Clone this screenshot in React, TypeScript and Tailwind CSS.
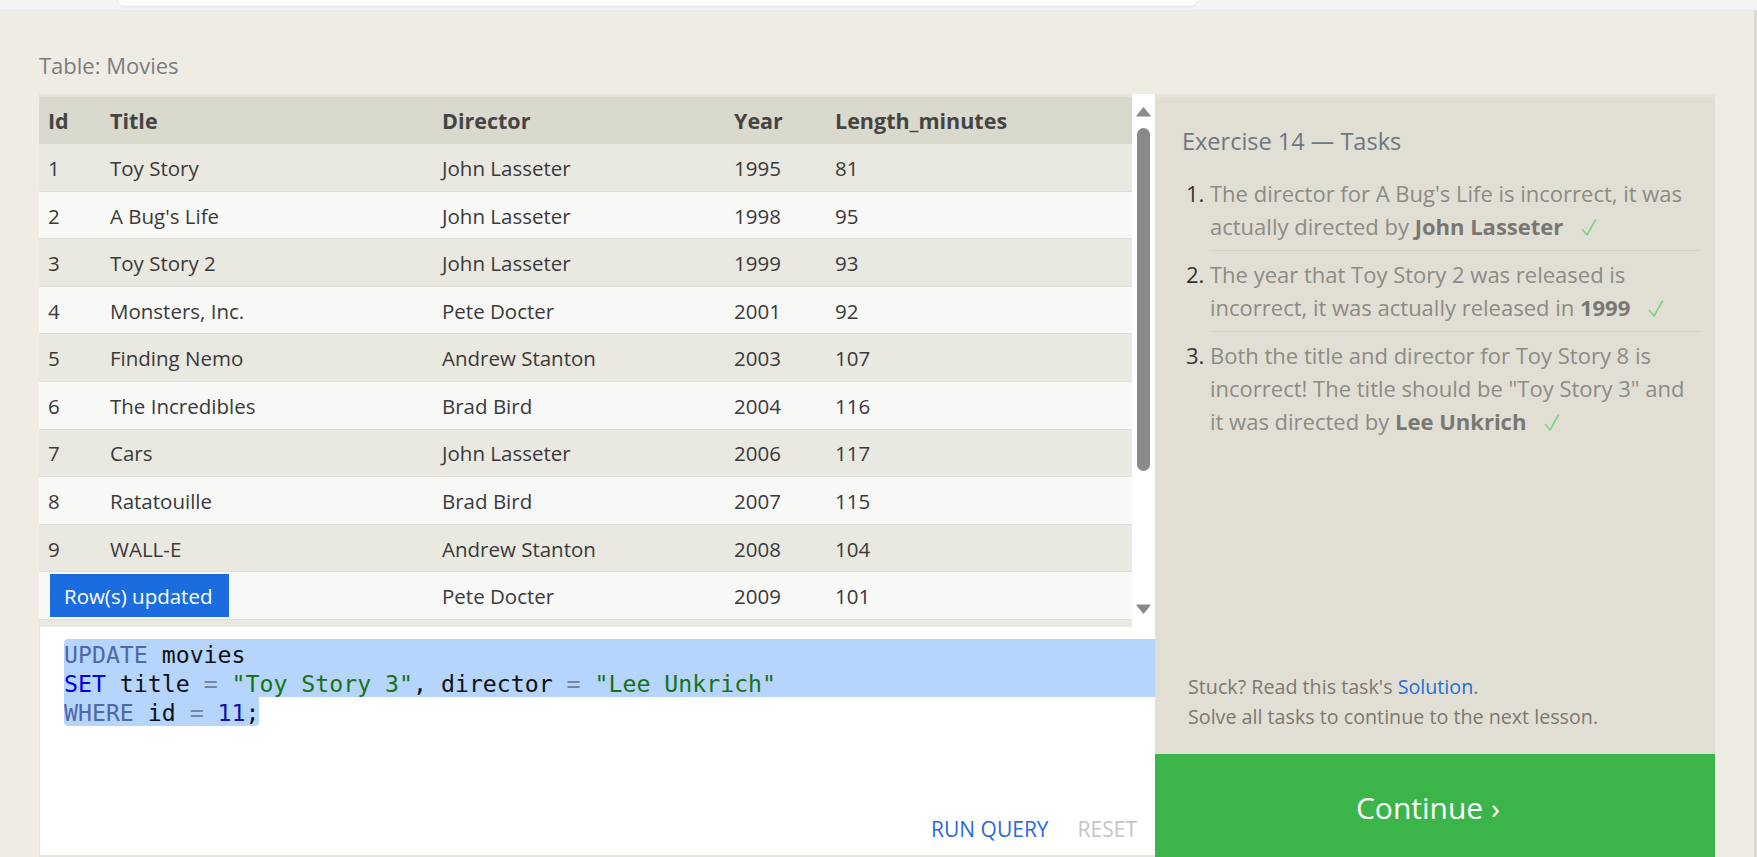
import React from "react";

const rows: [string, string, string, string, string][] = [
  ["1", "Toy Story", "John Lasseter", "1995", "81"],
  ["2", "A Bug's Life", "John Lasseter", "1998", "95"],
  ["3", "Toy Story 2", "John Lasseter", "1999", "93"],
  ["4", "Monsters, Inc.", "Pete Docter", "2001", "92"],
  ["5", "Finding Nemo", "Andrew Stanton", "2003", "107"],
  ["6", "The Incredibles", "Brad Bird", "2004", "116"],
  ["7", "Cars", "John Lasseter", "2006", "117"],
  ["8", "Ratatouille", "Brad Bird", "2007", "115"],
  ["9", "WALL-E", "Andrew Stanton", "2008", "104"],
  ["10", "Up", "Pete Docter", "2009", "101"],
  ["11", "Toy Story 3", "Lee Unkrich", "2010", "103"],
];

const gridCols = "grid grid-cols-[62px_332px_292px_101px_1fr]";

function Check() {
  return (
    <svg
      width="16"
      height="17"
      viewBox="0 0 16 17"
      className="inline-block ml-[18px] align-[-1px]"
    >
      <path d="M1.5 10.5 L6 16 L14.5 1" fill="none" stroke="#82cf86" strokeWidth="1.6" strokeLinecap="round" strokeLinejoin="round" />
    </svg>
  );
}

function Task({ n, last, children }: { n: string; last?: boolean; children: React.ReactNode }) {
  return (
    <li className="flex">
      <span className="w-[28px] shrink-0 pl-[4px] pt-[7px] text-[#333333]">{n}</span>
      <div className={"flex-1 py-[7px] text-[#8c8b85] " + (last ? "" : "border-b border-[#d6d4c9]")}>{children}</div>
    </li>
  );
}

export default function App() {
  return (
    <div className="w-[1757px] h-[857px] overflow-hidden bg-[#efece4] flex flex-col font-['Open_Sans']">
      {/* top strip */}
      <div className="h-[11px] shrink-0 bg-[#f4f4f4] border-b border-[#e7e7e5]">
        <div className="ml-[118px] w-[1079px] h-[6px] bg-white rounded-b-[10px] shadow-[0_1px_2px_rgba(0,0,0,0.08)]" />
      </div>

      <div className="flex flex-1 min-h-0">
        <div className="flex-1 px-[39px] flex flex-col min-h-0">
          <div className="pt-[39px] mb-[14px] text-[22px] leading-[30px] text-[#7a7d80]">Table: Movies</div>

          <div className="flex flex-1 min-h-0">
            {/* left column */}
            <div className="w-[1116px] flex flex-col">
              {/* table */}
              <div className="h-[533px] flex relative">
                <div className="w-[1093px] overflow-hidden border-t-[3px] border-[#e4e3da] text-[#3a3a3a]">
                  <div className={gridCols + " h-[47px] items-center bg-[#dad9cd] text-[21.5px] font-bold text-[#444444] pt-[2px]"}>
                    <div className="pl-[9px]">Id</div>
                    <div className="pl-[9px]">Title</div>
                    <div className="pl-[9px]">Director</div>
                    <div className="pl-[9px]">Year</div>
                    <div className="pl-[9px]">Length_minutes</div>
                  </div>
                  {rows.map((r, i) => (
                    <div
                      key={r[0]}
                      className={
                        gridCols +
                        " h-[47.6px] items-center border-b border-[#dfded8] text-[20.5px] pt-[2px] " +
                        (i % 2 === 0 ? "bg-[#e9e8e1]" : "bg-[#f8f8f7]")
                      }
                    >
                      {r.map((c, j) => (
                        <div key={j} className="pl-[9px] whitespace-nowrap">
                          {c}
                        </div>
                      ))}
                    </div>
                  ))}
                </div>
                {/* scrollbar */}
                <div className="w-[23px] bg-white relative">
                  <svg width="15" height="10" viewBox="0 0 15 10" className="absolute left-[4px] top-[13px]">
                    <path d="M7.5 1 L14 9 L1 9 Z" fill="#8a8a8a" stroke="#8a8a8a" strokeWidth="1.2" strokeLinejoin="round" />
                  </svg>
                  <div className="absolute left-[5px] top-[34px] w-[13px] h-[343px] rounded-full bg-[#8a8a8a]" />
                  <svg width="15" height="10" viewBox="0 0 15 10" className="absolute left-[4px] top-[510px]">
                    <path d="M1 1 L14 1 L7.5 9 Z" fill="#8a8a8a" stroke="#8a8a8a" strokeWidth="1.2" strokeLinejoin="round" />
                  </svg>
                </div>
                {/* toast */}
                <div className="absolute left-[11px] bottom-[10px] h-[43px] w-[179px] bg-[#1b6ddf] text-white text-[20.5px] flex items-center pl-[14px] pt-[1px]">
                  Row(s) updated
                </div>
              </div>

              {/* editor */}
              <div className="flex-1 bg-white border-l border-b-2 border-[#e5e4dd] flex flex-col">
                <div className="pt-[12px] pl-[24px] font-['DejaVu_Sans_Mono'] text-[23.2px] leading-[29px] text-[#111111] whitespace-pre">
                  <div className="bg-[#b5d5fc] rounded-tl-[4px] pt-[1px] h-[29px]">
                    <span className="text-[#5167a6]">UPDATE</span> movies
                  </div>
                  <div className="bg-[#b5d5fc] pt-[1px] h-[29px]">
                    <span className="text-[#0000ee]">SET</span> title <span className="text-[#7585a2]">=</span>{" "}
                    <span className="text-[#167316]">"Toy Story 3"</span>, director <span className="text-[#7585a2]">=</span>{" "}
                    <span className="text-[#167316]">"Lee Unkrich"</span>
                  </div>
                  <div>
                    <span className="inline-block bg-[#b5d5fc] rounded-b-[4px] pt-[1px] h-[29px]">
                      <span className="text-[#5167a6]">WHERE</span> id <span className="text-[#7585a2]">=</span>{" "}
                      <span className="text-[#1111a8]">11</span>;
                    </span>
                  </div>
                </div>
                <div className="flex-1" />
                <div className="flex justify-end gap-[29px] pr-[18px] pb-[14px] text-[21px] leading-[24px]">
                  <span className="text-[#2b6bd9]">RUN QUERY</span>
                  <span className="text-[#c5c5c5]">RESET</span>
                </div>
              </div>
            </div>

            {/* right panel */}
            <div className="w-[560px] flex flex-col bg-[#e1dfd4] border-t-[3px] border-[#e6e4dc]">
              <div className="pl-[27px] pr-[14px] pt-[30px]">
                <div className="text-[23.5px] leading-[28px] text-[#6e7685]">Exercise 14 — Tasks</div>
                <ul className="mt-[15px] text-[22px] leading-[33px]">
                  <Task n="1.">
                    The director for A Bug's Life is incorrect, it was actually directed by{" "}
                    <b className="text-[#787772]">John Lasseter</b>
                    <Check />
                  </Task>
                  <Task n="2.">
                    The year that Toy Story 2 was released is incorrect, it was actually released in{" "}
                    <b className="text-[#787772]">1999</b>
                    <Check />
                  </Task>
                  <Task n="3." last>
                    Both the title and director for Toy Story 8 is incorrect! The title should be "Toy Story 3" and it was
                    directed by <b className="text-[#787772]">Lee Unkrich</b>
                    <Check />
                  </Task>
                </ul>
              </div>
              <div className="flex-1" />
              <div className="pl-[33px] pb-[22px] text-[19.7px] leading-[30px] text-[#7d7770]">
                <div>
                  Stuck? Read this task's <span className="text-[#1f6fd8]">Solution</span>.
                </div>
                <div>Solve all tasks to continue to the next lesson.</div>
              </div>
              <div className="h-[103px] shrink-0 bg-[#3bb54a] flex items-center justify-center text-white text-[30px] pt-[4px] pr-[14px]">
                Continue ›
              </div>
            </div>
          </div>
        </div>
        <div className="w-[3px] bg-[#dcd9d2]" />
      </div>
    </div>
  );
}
